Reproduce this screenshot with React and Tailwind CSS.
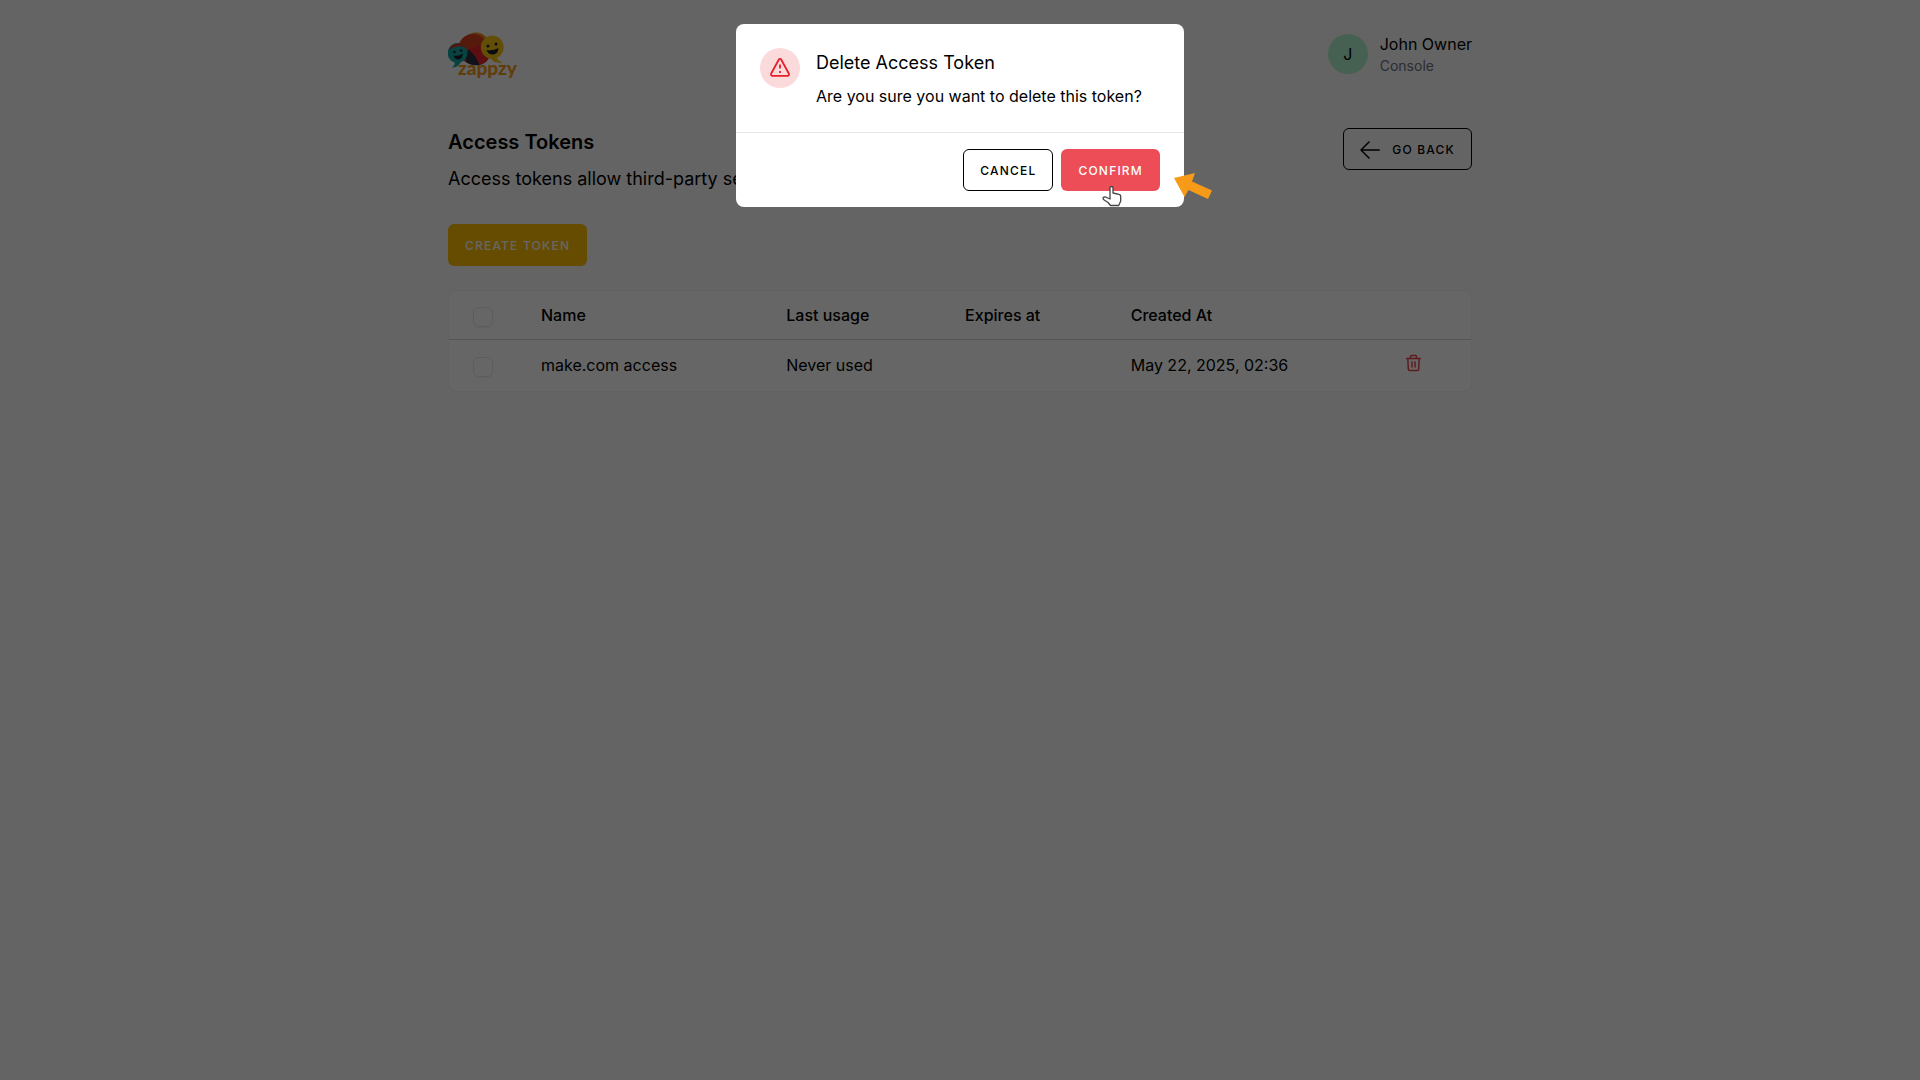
import { useState } from 'react';

const TOKENS = [
    { id: 1, name: 'make.com access', lastUsage: 'Never used', expiresAt: '', createdAt: 'May 22, 2025, 02:36' },
];

const BUTTON_BASE = 'inline-flex h-[42px] items-center rounded-md border px-4 pt-px text-xs font-medium uppercase tracking-widest';

const BUTTON_STYLES = {
    primary: 'border-transparent bg-[#ffbf00] text-white',
    secondary: 'border-black bg-transparent text-black',
    danger: 'border-transparent bg-[#ec4d56] text-white',
};

function Button({ variant = 'secondary', children, ...props }) {
    return (
        <button type="button" className={`${BUTTON_BASE} ${BUTTON_STYLES[variant]}`} {...props}>
            {children}
        </button>
    );
}

function Logo() {
    return (
        <svg viewBox="0 0 70 48" className="h-12 w-[70px]" role="img" aria-label="zappzy">
            <circle cx="28" cy="14" r="13.500" fill="#f08a1c" />
            <circle cx="25" cy="17" r="15" fill="#d8431f" />
            <path d="M18 30C17 25 18 20 21 17l14 15c-6 2-12 2-17-2z" fill="#2b3140" />
            <path d="M21 18c4-4 11-6 17-4l3 12c-2 4-6 7-10 6-2-6-5-10-10-14z" fill="#e8252e" />
            <path d="M10 11a10 10 0 0 1 2.500 19.500c-1.500 3-4.500 5-9 5 2.500-1.500 3.500-3 3-5A10 10 0 0 1 10 11z" fill="#14a5a3" />
            <path d="M1 18a10 10 0 0 1 18-1.500C14 13 7 14 1 18z" fill="#d03a26" />
            <path d="M44.500 3.500a11.700 11.700 0 0 1 4.500 22.300c.5 2 2.500 3.700 6 5-6 .8-10.500-1-12-4A11.700 11.700 0 0 1 44.500 3.500z" fill="#f8c414" />
            <circle cx="6.500" cy="20" r="1.300" fill="#16202c" />
            <circle cx="13" cy="18.500" r="1.300" fill="#16202c" />
            <path d="M5.500 23.500q5.500 1 9.500-2-.5 5.500-4.500 6-4 0-5-4z" fill="#16202c" />
            <circle cx="40" cy="14" r="1.500" fill="#16202c" />
            <circle cx="48" cy="12" r="1.500" fill="#16202c" />
            <path d="M38.500 18q6.500 1 12-2-.5 6-5.500 6.500-5 0-6.500-4.500z" fill="#16202c" />
            <text x="10" y="43" fontSize="19" fontWeight="900" fontFamily="Lato, sans-serif" fill="#f29a1a">zappzy</text>
        </svg>
    );
}

function Checkbox({ label }) {
    return (
        <input
            type="checkbox"
            aria-label={label}
            className="block size-5 appearance-none rounded-md border border-gray-200 shadow-xs"
        />
    );
}

function TokenTable({ tokens }) {
    return (
        <div className="mt-6 overflow-hidden rounded-lg border border-gray-100 bg-white">
            <table className="w-full table-fixed text-left text-base">
                <colgroup>
                    <col className="w-[68px]" />
                    <col className="w-[24%]" />
                    <col className="w-[17.5%]" />
                    <col className="w-[16.2%]" />
                    <col />
                    <col className="w-[90px]" />
                </colgroup>
                <thead>
                    <tr className="border-b border-gray-300">
                        <th className="px-6 pt-1"><Checkbox label="Select all tokens" /></th>
                        <th className="px-6 py-3 font-medium">Name</th>
                        <th className="px-6 py-3 font-medium">Last usage</th>
                        <th className="px-6 py-3 font-medium">Expires at</th>
                        <th className="px-6 py-3 font-medium">Created At</th>
                        <th />
                    </tr>
                </thead>
                <tbody>
                    {tokens.map((token) => (
                        <tr key={token.id} className="h-[51px]">
                            <td className="px-6 pt-1"><Checkbox label={`Select ${token.name}`} /></td>
                            <td className="px-6">{token.name}</td>
                            <td className="px-6">{token.lastUsage}</td>
                            <td className="px-6">{token.expiresAt}</td>
                            <td className="px-6">{token.createdAt}</td>
                            <td className="px-6 pb-1">
                                <button type="button" aria-label={`Delete ${token.name}`} className="block text-[#e5484d]">
                                    <svg viewBox="0 0 16 18" className="h-[18px] w-4" fill="none" stroke="currentColor" strokeWidth="1.5" strokeLinecap="round" strokeLinejoin="round">
                                        <path d="M1.500 4.500h14M5.500 4.500V2.500a1 1 0 0 1 1-1h4a1 1 0 0 1 1 1v2M2.800 4.500l.5 10.500a1.500 1.500 0 0 0 1.500 1.500h7.400a1.500 1.500 0 0 0 1.500-1.500l.5-10.500M7 8v5M10 8v5" />
                                    </svg>
                                </button>
                            </td>
                        </tr>
                    ))}
                </tbody>
            </table>
        </div>
    );
}

function DeleteDialog({ onClose }) {
    return (
        <div className="fixed inset-0 flex items-start justify-center bg-black/60 p-6">
            <div role="dialog" aria-modal="true" aria-labelledby="dialog-title" className="relative w-full max-w-md rounded-lg bg-white">
                <div className="flex gap-4 border-b border-gray-200 p-6">
                    <div className="flex size-10 shrink-0 items-center justify-center rounded-full bg-[#fbdadc] text-[#e8202a]">
                        <svg viewBox="0 0 20 20" className="size-5" fill="none" stroke="currentColor" strokeWidth="1.8" strokeLinejoin="round">
                            <path d="M8.700 1.700 1.200 15.500A1.500 1.500 0 0 0 2.500 17.800h15a1.500 1.500 0 0 0 1.300-2.300L11.300 1.700a1.500 1.500 0 0 0-2.600 0z" />
                            <path d="M10 6.500v4M10 13v2" />
                        </svg>
                    </div>
                    <div>
                        <h2 id="dialog-title" className="pt-px text-lg leading-7">Delete Access Token</h2>
                        <p className="mt-[7px]">Are you sure you want to delete this token?</p>
                    </div>
                </div>
                <div className="flex justify-end gap-2 px-6 py-4">
                    <Button onClick={onClose}>Cancel</Button>
                    <Button variant="danger" onClick={onClose}>Confirm</Button>
                </div>
                <svg viewBox="0 0 20 22" className="pointer-events-none absolute right-[62px] bottom-0 h-[22px] w-5" fill="white" stroke="#444" strokeWidth="1.3" strokeLinejoin="round">
                    <path d="M8 11V3a1.500 1.500 0 0 1 3 0v5l6 1.300a2 2 0 0 1 1.700 2V16l-2 4.500H8.500L6 17.500 1.500 14.500c-1-1.500 0-3 2-2.500L8 14z" />
                </svg>
                <svg viewBox="0 0 38 26" className="pointer-events-none absolute -right-7 bottom-2 h-[26px] w-[38px]" fill="#f79a17">
                    <path d="M0 5 21 0 18 8.500 38 17.500 34 26 14.500 17 10.500 24z" />
                </svg>
            </div>
        </div>
    );
}

export default function App() {
    const [confirming, setConfirming] = useState(true);

    return (
        <div className="min-h-screen bg-[#fafafa] font-['Inter',sans-serif] text-black">
            <div className="mx-auto max-w-5xl pt-8">
                <header className="flex h-12 items-start justify-between">
                    <a href="#home"><Logo /></a>
                    <div className="flex items-center gap-3">
                        <div className="flex size-10 items-center justify-center rounded-full bg-[#b0f0cc]">J</div>
                        <div>
                            <p>John Owner</p>
                            <p className="text-sm text-gray-500">Console</p>
                        </div>
                    </div>
                </header>
                <main className="mt-12">
                    <div className="flex items-start justify-between">
                        <div>
                            <h1 className="text-xl font-semibold">Access Tokens</h1>
                            <p className="mt-[9px] text-lg leading-7">Access tokens allow third-party services to authenticate.</p>
                        </div>
                        <Button>
                            <svg viewBox="0 0 20 18" className="mr-3 h-[18px] w-5" fill="none" stroke="currentColor" strokeWidth="1.5" strokeLinecap="round" strokeLinejoin="round">
                                <path d="M19.200 9H1M9 1 1 9l8 8" />
                            </svg>
                            Go back
                        </Button>
                    </div>
                    <div className="mt-[31px]">
                        <Button variant="primary" onClick={() => setConfirming(true)}>Create token</Button>
                    </div>
                    <TokenTable tokens={TOKENS} />
                </main>
            </div>
            {confirming && <DeleteDialog onClose={() => setConfirming(false)} />}
        </div>
    );
}
